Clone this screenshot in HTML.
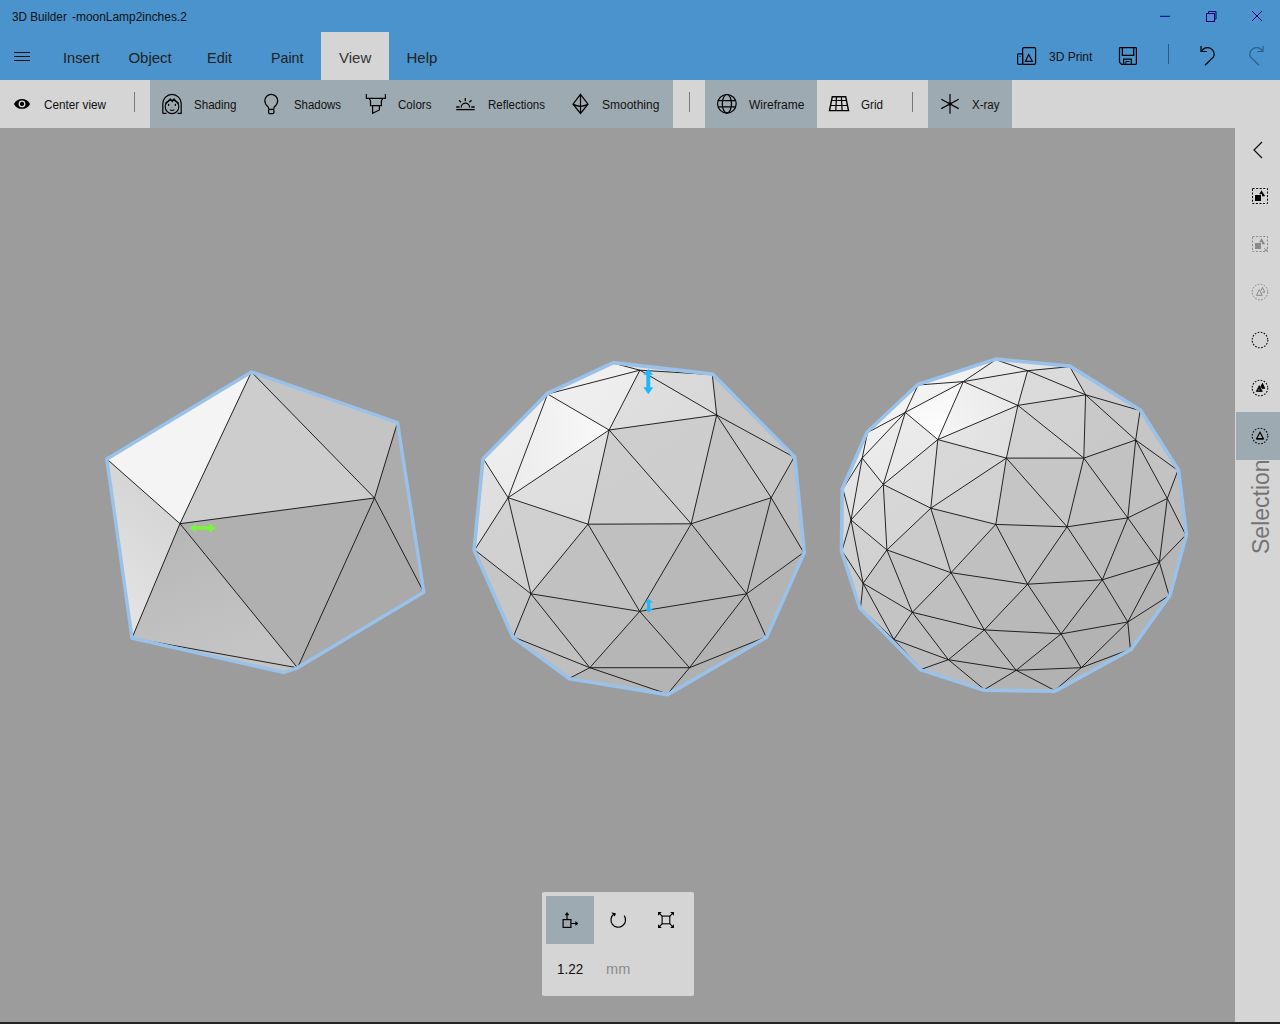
<!DOCTYPE html>
<html><head><meta charset="utf-8"><style>
html,body{margin:0;padding:0;width:1280px;height:1024px;overflow:hidden;background:#9c9c9c}
.t{position:absolute;font-family:"Liberation Sans",sans-serif;white-space:nowrap}
svg{overflow:visible}
</style></head><body>
<div style="position:absolute;left:0;top:0;width:1280px;height:80px;background:#4a93cc"></div><div style="position:absolute;left:321px;top:32px;width:68px;height:48px;background:#d5d5d5"></div><div style="position:absolute;left:0;top:80px;width:1280px;height:48px;background:#d5d5d5"></div><div style="position:absolute;left:150px;top:80px;width:523px;height:48px;background:#9eaab1"></div><div style="position:absolute;left:705px;top:80px;width:112px;height:48px;background:#9eaab1"></div><div style="position:absolute;left:928px;top:80px;width:84px;height:48px;background:#9eaab1"></div><div style="position:absolute;left:0;top:128px;width:1235px;height:894px;background:#9c9c9c"></div><div style="position:absolute;left:1235px;top:128px;width:45px;height:894px;background:#d5d5d5"></div><div style="position:absolute;left:1236px;top:412px;width:44px;height:48px;background:#9eaab1"></div><div style="position:absolute;left:0;top:1022px;width:1280px;height:2px;background:#222"></div><div style="position:absolute;left:134px;top:92px;width:1px;height:20px;background:#777"></div><div style="position:absolute;left:689px;top:92px;width:1px;height:20px;background:#777"></div><div style="position:absolute;left:912px;top:92px;width:1px;height:20px;background:#777"></div><div style="position:absolute;left:1168px;top:44px;width:1px;height:20px;background:#2a5a80"></div><div class="t" style="left:12px;top:10.94px;font-size:12px;line-height:12px;color:#111;transform:scaleX(0.978);transform-origin:0 0;">3D Builder</div>
<div class="t" style="left:72.4px;top:10.94px;font-size:12px;line-height:12px;color:#111;transform:scaleX(0.995);transform-origin:0 0;">-moonLamp2inches.2</div>
<div class="t" style="left:63.3px;top:49.80px;font-size:15px;line-height:15px;color:#222;transform:scaleX(0.978);transform-origin:0 0;">Insert</div>
<div class="t" style="left:128.4px;top:49.80px;font-size:15px;line-height:15px;color:#222;">Object</div>
<div class="t" style="left:207px;top:49.80px;font-size:15px;line-height:15px;color:#222;transform:scaleX(0.967);transform-origin:0 0;">Edit</div>
<div class="t" style="left:270.5px;top:49.80px;font-size:15px;line-height:15px;color:#222;transform:scaleX(0.95);transform-origin:0 0;">Paint</div>
<div class="t" style="left:339px;top:49.80px;font-size:15px;line-height:15px;color:#333;">View</div>
<div class="t" style="left:406.5px;top:49.80px;font-size:15px;line-height:15px;color:#222;">Help</div>
<div class="t" style="left:44.2px;top:99.44px;font-size:12px;line-height:12px;color:#111;transform:scaleX(0.979);transform-origin:0 0;">Center view</div>
<div class="t" style="left:194px;top:99.44px;font-size:12px;line-height:12px;color:#111;transform:scaleX(0.965);transform-origin:0 0;">Shading</div>
<div class="t" style="left:294px;top:99.44px;font-size:12px;line-height:12px;color:#111;transform:scaleX(0.952);transform-origin:0 0;">Shadows</div>
<div class="t" style="left:398px;top:99.44px;font-size:12px;line-height:12px;color:#111;transform:scaleX(0.966);transform-origin:0 0;">Colors</div>
<div class="t" style="left:488px;top:99.44px;font-size:12px;line-height:12px;color:#111;transform:scaleX(0.96);transform-origin:0 0;">Reflections</div>
<div class="t" style="left:602px;top:99.44px;font-size:12px;line-height:12px;color:#111;">Smoothing</div>
<div class="t" style="left:749px;top:99.44px;font-size:12px;line-height:12px;color:#111;">Wireframe</div>
<div class="t" style="left:861px;top:99.44px;font-size:12px;line-height:12px;color:#111;transform:scaleX(0.97);transform-origin:0 0;">Grid</div>
<div class="t" style="left:972px;top:99.44px;font-size:12px;line-height:12px;color:#111;transform:scaleX(0.959);transform-origin:0 0;">X-ray</div>
<div class="t" style="left:1049px;top:51.24px;font-size:12px;line-height:12px;color:#111;">3D Print</div>
<div style="position:absolute;left:542px;top:892px;width:152px;height:104px;background:#d5d5d5;border-radius:2px"></div><div style="position:absolute;left:546px;top:896px;width:48px;height:48px;background:#9eaab1"></div><div class="t" style="left:557px;top:961.65px;font-size:14px;line-height:14px;color:#111;transform:scaleX(0.963);transform-origin:0 0;">1.22</div>
<div class="t" style="left:605.7px;top:961.65px;font-size:14px;line-height:14px;color:#8a8a8a;transform:scaleX(1.04);transform-origin:0 0;">mm</div>
<div class="t" style="left:1250px;top:554px;font-size:23px;line-height:23px;color:#747474;transform:rotate(-90deg);transform-origin:0 0;width:100px">Selection</div><div style="position:absolute;left:14px;top:51.5px;width:16px;height:1px;background:#111"></div><div style="position:absolute;left:14px;top:55.5px;width:16px;height:1px;background:#111"></div><div style="position:absolute;left:14px;top:59.5px;width:16px;height:1px;background:#111"></div><svg style="position:absolute;left:12px;top:96px" width="20" height="16" viewBox="0 0 20 16" fill="none" stroke="#000" stroke-width="1.2"><path d="M1.9 7.9 C5.2 1.3 14.8 1.3 18.1 7.9 C14.8 14.5 5.2 14.5 1.9 7.9 Z" fill="#000" stroke="none"/><circle cx="10" cy="7.9" r="2.75" fill="none" stroke="#d5d5d5" stroke-width="1.4"/><circle cx="10" cy="7.9" r="1.7" fill="#000" stroke="none"/></svg>
<svg style="position:absolute;left:155px;top:88px" width="40" height="32" viewBox="0 0 40 32" fill="none" stroke="#000" stroke-width="1.2"><path d="M7.8 25.4 V15.6 A9.2 9.2 0 0 1 26.2 15.6 V25.4 H22.5 M7.8 25.4 H11.5"/><circle cx="17" cy="18.8" r="6.8"/><path d="M10.3 15.2 L13 13.5 L15.2 11 L17.3 13.6 L19 11 L21.3 13.5 L23.8 15.2"/><ellipse cx="13.6" cy="16.9" rx="0.75" ry="1.1" fill="#000" stroke="none"/><ellipse cx="20.4" cy="16.9" rx="0.75" ry="1.1" fill="#000" stroke="none"/><circle cx="17" cy="19" r="0.5" fill="#444" stroke="none"/><path d="M15 21.6 Q17 23.4 19.4 21.6" stroke-width="1.1"/></svg>
<svg style="position:absolute;left:255px;top:88px" width="40" height="32" viewBox="0 0 40 32" fill="none" stroke="#000" stroke-width="1.2"><path d="M13.8 21.3 L13.4 19.3 C11 17.2 9.8 15.3 9.8 12.8 A6.45 6.45 0 0 1 22.7 12.8 C22.7 15.3 21.5 17.2 19.1 19.3 L18.7 21.3"/><rect x="13.6" y="21.3" width="5.3" height="4.3" rx="1"/></svg>
<svg style="position:absolute;left:358px;top:88px" width="40" height="32" viewBox="0 0 40 32" fill="none" stroke="#000" stroke-width="1.2"><path d="M8.4 6 V10.3 H27.4 V6"/><path d="M11.2 10.5 L12.5 12.8 V17.7 H23.4 V12.8 L24.7 10.5"/><path d="M14.6 17.8 V25.4 L21.4 22 V17.8"/></svg>
<svg style="position:absolute;left:448px;top:88px" width="40" height="32" viewBox="0 0 40 32" fill="none" stroke="#000" stroke-width="1.2"><path d="M13.2 19.4 A4.2 4.2 0 0 1 21.6 19.4"/><path d="M17.3 10 V13.3 M11 12.3 L13 14.3 M23.5 12.3 L21.4 14.3" stroke-width="1.3"/><path d="M8.2 19 H11.6 M23.3 19 H26.7" stroke-width="1.5"/><path d="M8.2 21.6 H26.7" stroke-width="1.3"/></svg>
<svg style="position:absolute;left:562px;top:88px" width="40" height="32" viewBox="0 0 40 32" fill="none" stroke="#000" stroke-width="1.2"><path d="M18.5 6.3 L26 16.2 L18.5 25.5 L11 16.2 Z M18.5 6.3 V25.5 M11.3 16.4 Q18.5 20.2 25.7 16.4" stroke-linejoin="miter"/></svg>
<svg style="position:absolute;left:708px;top:88px" width="40" height="32" viewBox="0 0 40 32" fill="none" stroke="#000" stroke-width="1.2"><circle cx="18.9" cy="15.8" r="9.3"/><ellipse cx="18.9" cy="15.8" rx="4.6" ry="9.3"/><path d="M9.8 12.7 H28 M9.8 18.9 H28"/></svg>
<svg style="position:absolute;left:820px;top:88px" width="40" height="32" viewBox="0 0 40 32" fill="none" stroke="#000" stroke-width="1.2"><path d="M12.3 8.7 H25.7 L28.5 22.6 H9.5 Z" stroke-width="1.4"/><path d="M16.5 8.7 L15.8 22.6 M21.4 8.7 L22.1 22.6 M11.5 12.5 H26.5 M10.5 17.5 H27.5"/></svg>
<svg style="position:absolute;left:930px;top:88px" width="40" height="32" viewBox="0 0 40 32" fill="none" stroke="#000" stroke-width="1.2"><path d="M20 6 V25.8" stroke-width="1.4" stroke="#1a1a1a"/><path d="M11.3 11.2 L28.7 20.6 M11.3 20.6 L28.7 11.2"/><circle cx="20" cy="15.9" r="1.6" fill="#000" stroke="none"/></svg>
<svg style="position:absolute;left:1010px;top:40px" width="40" height="32" viewBox="0 0 40 32" fill="none" stroke="#000" stroke-width="1.2"><rect x="7.6" y="13.8" width="5" height="10.5" rx="1"/><rect x="12.6" y="7.6" width="13" height="16.7" rx="1.2"/><path d="M15.4 21.3 H22.4 L18.7 14.5 Z"/><path d="M9.4 16.4 H10.6" stroke-width="0.8"/></svg>
<svg style="position:absolute;left:1108px;top:40px" width="40" height="32" viewBox="0 0 40 32" fill="none" stroke="#000" stroke-width="1.2"><path d="M12.3 7.6 H27.6 Q28.4 7.6 28.4 8.4 V23.6 Q28.4 24.3 27.6 24.3 H13.6 L11.5 22.2 V8.4 Q11.5 7.6 12.3 7.6 Z"/><path d="M14.4 7.6 V15.4 H25.7 V7.6"/><path d="M15.6 24.3 V19.2 H23.3 V24.3"/><path d="M17.8 24 V21.5 H21.5" stroke-width="0.9"/></svg>
<svg style="position:absolute;left:1190px;top:40px" width="80" height="32" viewBox="0 0 80 32" fill="none" stroke="#000" stroke-width="1.2"><path d="M11.6 11.3 A6.3 6.3 0 1 1 23.5 17 L15 25.3"/><path d="M11 6 V11.5 H16.8"/><g stroke="#1f4e78" opacity="0.75"><path d="M72.4 11.3 A6.3 6.3 0 1 0 60.5 17 L69 25.3"/><path d="M73 6 V11.5 H67.2"/></g></svg>
<svg style="position:absolute;left:1150px;top:4px" width="120" height="24" viewBox="0 0 120 24" fill="none" stroke="#000" stroke-width="1.2"><g stroke="#000080" stroke-width="1"><path d="M10 12.3 H20"/><path d="M58.5 9 V7.5 H66 V15 H64.5"/><rect x="56.5" y="9.5" width="8" height="8"/><path d="M102 7 L112 17 M112 7 L102 17"/></g></svg>
<svg style="position:absolute;left:1244px;top:136px" width="32" height="28" viewBox="0 0 32 28" fill="none" stroke="#000" stroke-width="1.2"><path d="M18 6 L10 14 L18 22" stroke="#111"/></svg>
<svg style="position:absolute;left:1244px;top:180px" width="32" height="32" viewBox="0 0 32 32" fill="none" stroke="#000" stroke-width="1.2"><rect x="8.5" y="8.5" width="15" height="15" stroke-width="1" stroke-dasharray="2 1.6"/><rect x="11" y="15" width="6" height="6" fill="#000" stroke="none"/><path d="M17.5 10.3 L21.2 16.3 H18 V14.3 H15.2 Z" fill="#000" stroke="none"/></svg>
<svg style="position:absolute;left:1244px;top:228px" width="32" height="32" viewBox="0 0 32 32" fill="none" stroke="#000" stroke-width="1.2"><g stroke="#8a8a8a" fill="#8a8a8a"><rect x="8.5" y="8.5" width="15" height="15" fill="none" stroke-width="1" stroke-dasharray="2 1.6"/><rect x="11" y="15" width="6" height="6" stroke="none"/><path d="M17.5 10.3 L21.2 16.3 H18 V14.3 H15.2 Z" stroke="none"/><path d="M20.3 20.3 L23.3 23.3 M23.3 20.3 L20.3 23.3" fill="none" stroke-width="1"/></g></svg>
<svg style="position:absolute;left:1244px;top:276px" width="32" height="32" viewBox="0 0 32 32" fill="none" stroke="#000" stroke-width="1.2"><g stroke="#8a8a8a"><circle cx="16" cy="16" r="7.8" stroke-width="1" stroke-dasharray="1.7 1.4"/><path d="M12.4 19.3 L15.3 13.6 L18.2 19.3 Z M16.9 14.6 L18.5 11.4 L20.7 16.3 H18.4" stroke-width="1"/></g></svg>
<svg style="position:absolute;left:1244px;top:324px" width="32" height="32" viewBox="0 0 32 32" fill="none" stroke="#000" stroke-width="1.2"><circle cx="16" cy="16" r="7.8" stroke-width="1.1" stroke-dasharray="1.7 1.4" stroke="#111"/></svg>
<svg style="position:absolute;left:1244px;top:372px" width="32" height="32" viewBox="0 0 32 32" fill="none" stroke="#000" stroke-width="1.2"><circle cx="16" cy="16" r="7.8" stroke-width="1.1" stroke-dasharray="1.7 1.4" stroke="#111"/><path d="M12.3 19.4 L15.3 13.6 L18.3 19.4 Z M16.9 14.6 L18.5 11.3 L20.8 16.4 H18.4 Z" fill="#000" stroke="#000" stroke-width="0.8"/><path d="M14.2 18.6 L15.3 16.2 V18.6 Z" fill="#d5d5d5" stroke="none"/></svg>
<svg style="position:absolute;left:1244px;top:420px" width="32" height="32" viewBox="0 0 32 32" fill="none" stroke="#000" stroke-width="1.2"><circle cx="16" cy="16" r="7.8" stroke-width="1.1" stroke-dasharray="1.7 1.4" stroke="#111"/><path d="M16 12.2 L19.3 18.6 H12.7 Z" stroke-width="1.2"/><path d="M12.5 18.8 H19.5" stroke-width="1.6"/></svg>
<svg style="position:absolute;left:550.7px;top:900px" width="40" height="40" viewBox="0 0 40 40" fill="none" stroke="#000" stroke-width="1.2"><rect x="12.1" y="19.6" width="7.8" height="7.8"/><path d="M16 19.5 V14.5 M20 23.5 H25"/><path d="M14.3 14.8 L16 12.6 L17.7 14.8 Z M24.7 21.8 L27 23.5 L24.7 25.2 Z" fill="#000" stroke-width="0.8"/></svg>
<svg style="position:absolute;left:598px;top:900px" width="40" height="40" viewBox="0 0 40 40" fill="none" stroke="#000" stroke-width="1.2"><path d="M26.2 15.7 A7.3 7.3 0 1 1 15.9 14.1" stroke-width="1.2"/><path d="M13.3 12.2 L18 13.5 L16.7 16.6 Z" fill="#000" stroke="none"/></svg>
<svg style="position:absolute;left:646px;top:900px" width="40" height="40" viewBox="0 0 40 40" fill="none" stroke="#000" stroke-width="1.2"><rect x="16.1" y="16.1" width="7.7" height="7.7" stroke-width="1.1"/><path d="M13 13 L16.3 16.3 M27 13 L23.7 16.3 M13 27 L16.3 23.7 M27 27 L23.7 23.7" stroke-width="1.1"/><path d="M12 12 H15.8 L12 15.8 Z M28 12 H24.2 L28 15.8 Z M12 28 H15.8 L12 24.2 Z M28 28 H24.2 L28 24.2 Z" fill="#000" stroke="none"/></svg>

<svg style="position:absolute;left:0;top:0" width="1280" height="1024" viewBox="0 0 1280 1024"><defs><linearGradient id="g0" gradientUnits="userSpaceOnUse" x1="508.1" y1="497.7" x2="477.9" y2="421.7"><stop offset="0" stop-color="rgb(235,235,235)"/><stop offset="1" stop-color="rgb(239,239,239)"/></linearGradient><linearGradient id="g1" gradientUnits="userSpaceOnUse" x1="530.9" y1="593.8" x2="481.1" y2="514.7"><stop offset="0" stop-color="rgb(207,207,207)"/><stop offset="1" stop-color="rgb(208,208,208)"/></linearGradient><linearGradient id="g2" gradientUnits="userSpaceOnUse" x1="474.7" y1="549.9" x2="449.8" y2="469.4"><stop offset="0" stop-color="rgb(222,222,222)"/><stop offset="1" stop-color="rgb(224,224,224)"/></linearGradient><linearGradient id="g3" gradientUnits="userSpaceOnUse" x1="530.9" y1="593.8" x2="507.1" y2="497.9"><stop offset="0" stop-color="rgb(208,208,208)"/><stop offset="1" stop-color="rgb(210,210,210)"/></linearGradient><linearGradient id="g4" gradientUnits="userSpaceOnUse" x1="712.3" y1="374.6" x2="615.7" y2="384.5"><stop offset="0" stop-color="rgb(226,226,226)"/><stop offset="1" stop-color="rgb(229,229,229)"/></linearGradient><linearGradient id="g5" gradientUnits="userSpaceOnUse" x1="716.7" y1="415.0" x2="640.5" y2="369.2"><stop offset="0" stop-color="rgb(217,217,217)"/><stop offset="1" stop-color="rgb(219,219,219)"/></linearGradient><linearGradient id="g6" gradientUnits="userSpaceOnUse" x1="639.9" y1="370.2" x2="607.0" y2="336.3"><stop offset="0" stop-color="rgb(239,239,239)"/><stop offset="1" stop-color="rgb(241,241,241)"/></linearGradient><linearGradient id="g7" gradientUnits="userSpaceOnUse" x1="609.1" y1="430.0" x2="554.3" y2="385.7"><stop offset="0" stop-color="rgb(236,236,236)"/><stop offset="1" stop-color="rgb(239,239,239)"/></linearGradient><linearGradient id="g8" gradientUnits="userSpaceOnUse" x1="588.0" y1="524.2" x2="572.6" y2="436.4"><stop offset="0" stop-color="rgb(221,221,221)"/><stop offset="1" stop-color="rgb(225,225,225)"/></linearGradient><linearGradient id="g9" gradientUnits="userSpaceOnUse" x1="508.1" y1="497.7" x2="615.6" y2="485.0"><stop offset="0" stop-color="rgb(235,235,235)"/><stop offset="1" stop-color="rgb(249,249,249)"/></linearGradient><linearGradient id="g10" gradientUnits="userSpaceOnUse" x1="716.7" y1="415.0" x2="665.8" y2="349.9"><stop offset="0" stop-color="rgb(220,220,220)"/><stop offset="1" stop-color="rgb(223,223,223)"/></linearGradient><linearGradient id="g11" gradientUnits="userSpaceOnUse" x1="691.2" y1="523.8" x2="630.0" y2="417.9"><stop offset="0" stop-color="rgb(205,205,205)"/><stop offset="1" stop-color="rgb(206,206,206)"/></linearGradient><linearGradient id="g12" gradientUnits="userSpaceOnUse" x1="691.2" y1="523.8" x2="606.7" y2="432.3"><stop offset="0" stop-color="rgb(205,205,205)"/><stop offset="1" stop-color="rgb(206,206,206)"/></linearGradient><linearGradient id="g13" gradientUnits="userSpaceOnUse" x1="860.5" y1="607.9" x2="860.4" y2="550.8"><stop offset="0" stop-color="rgb(202,202,202)"/><stop offset="1" stop-color="rgb(203,203,203)"/></linearGradient><linearGradient id="g14" gradientUnits="userSpaceOnUse" x1="842.9" y1="488.9" x2="877.7" y2="439.9"><stop offset="0" stop-color="rgb(233,233,233)"/><stop offset="1" stop-color="rgb(235,235,235)"/></linearGradient><linearGradient id="g15" gradientUnits="userSpaceOnUse" x1="842.0" y1="550.8" x2="849.5" y2="489.7"><stop offset="0" stop-color="rgb(217,217,217)"/><stop offset="1" stop-color="rgb(218,218,218)"/></linearGradient><linearGradient id="g16" gradientUnits="userSpaceOnUse" x1="863.1" y1="583.3" x2="865.9" y2="520.7"><stop offset="0" stop-color="rgb(209,209,209)"/><stop offset="1" stop-color="rgb(210,210,210)"/></linearGradient><linearGradient id="g17" gradientUnits="userSpaceOnUse" x1="851.0" y1="520.0" x2="851.0" y2="458.1"><stop offset="0" stop-color="rgb(226,226,226)"/><stop offset="1" stop-color="rgb(228,228,228)"/></linearGradient><linearGradient id="g18" gradientUnits="userSpaceOnUse" x1="851.0" y1="520.0" x2="829.8" y2="472.5"><stop offset="0" stop-color="rgb(225,225,225)"/><stop offset="1" stop-color="rgb(227,227,227)"/></linearGradient><linearGradient id="g19" gradientUnits="userSpaceOnUse" x1="863.1" y1="583.3" x2="837.4" y2="526.1"><stop offset="0" stop-color="rgb(209,209,209)"/><stop offset="1" stop-color="rgb(210,210,210)"/></linearGradient><linearGradient id="g20" gradientUnits="userSpaceOnUse" x1="886.9" y1="549.9" x2="864.1" y2="492.1"><stop offset="0" stop-color="rgb(216,216,216)"/><stop offset="1" stop-color="rgb(217,217,217)"/></linearGradient><linearGradient id="g21" gradientUnits="userSpaceOnUse" x1="1069.8" y1="366.7" x2="1017.5" y2="329.3"><stop offset="0" stop-color="rgb(227,227,227)"/><stop offset="1" stop-color="rgb(229,229,229)"/></linearGradient><linearGradient id="g22" gradientUnits="userSpaceOnUse" x1="1083.8" y1="458.1" x2="1038.1" y2="391.5"><stop offset="0" stop-color="rgb(209,209,209)"/><stop offset="1" stop-color="rgb(210,210,210)"/></linearGradient><linearGradient id="g23" gradientUnits="userSpaceOnUse" x1="1135.7" y1="440.0" x2="1092.3" y2="389.1"><stop offset="0" stop-color="rgb(200,200,200)"/><stop offset="1" stop-color="rgb(201,201,201)"/></linearGradient><linearGradient id="g24" gradientUnits="userSpaceOnUse" x1="1083.8" y1="458.1" x2="1025.1" y2="398.3"><stop offset="0" stop-color="rgb(209,209,209)"/><stop offset="1" stop-color="rgb(210,210,210)"/></linearGradient><linearGradient id="g25" gradientUnits="userSpaceOnUse" x1="1085.6" y1="394.8" x2="1049.3" y2="352.2"><stop offset="0" stop-color="rgb(218,218,218)"/><stop offset="1" stop-color="rgb(219,219,219)"/></linearGradient><linearGradient id="g26" gradientUnits="userSpaceOnUse" x1="1085.6" y1="394.8" x2="1034.7" y2="360.2"><stop offset="0" stop-color="rgb(218,218,218)"/><stop offset="1" stop-color="rgb(220,220,220)"/></linearGradient><linearGradient id="g27" gradientUnits="userSpaceOnUse" x1="1140.1" y1="410.6" x2="1073.9" y2="361.2"><stop offset="0" stop-color="rgb(205,205,205)"/><stop offset="1" stop-color="rgb(205,205,205)"/></linearGradient><linearGradient id="g28" gradientUnits="userSpaceOnUse" x1="1135.7" y1="440.0" x2="1078.2" y2="408.0"><stop offset="0" stop-color="rgb(201,201,201)"/><stop offset="1" stop-color="rgb(201,201,201)"/></linearGradient><linearGradient id="g29" gradientUnits="userSpaceOnUse" x1="1006.4" y1="458.1" x2="939.2" y2="435.5"><stop offset="0" stop-color="rgb(224,224,224)"/><stop offset="1" stop-color="rgb(230,230,230)"/></linearGradient><linearGradient id="g30" gradientUnits="userSpaceOnUse" x1="883.3" y1="484.5" x2="859.6" y2="433.7"><stop offset="0" stop-color="rgb(233,233,233)"/><stop offset="1" stop-color="rgb(235,235,235)"/></linearGradient><linearGradient id="g31" gradientUnits="userSpaceOnUse" x1="883.3" y1="484.5" x2="870.3" y2="419.4"><stop offset="0" stop-color="rgb(232,232,232)"/><stop offset="1" stop-color="rgb(235,235,235)"/></linearGradient><linearGradient id="g32" gradientUnits="userSpaceOnUse" x1="867.5" y1="432.6" x2="859.1" y2="400.4"><stop offset="0" stop-color="rgb(242,242,242)"/><stop offset="1" stop-color="rgb(243,243,243)"/></linearGradient><linearGradient id="g33" gradientUnits="userSpaceOnUse" x1="862.2" y1="458.1" x2="853.1" y2="428.5"><stop offset="0" stop-color="rgb(239,239,239)"/><stop offset="1" stop-color="rgb(241,241,241)"/></linearGradient><linearGradient id="g34" gradientUnits="userSpaceOnUse" x1="995.8" y1="524.4" x2="968.4" y2="483.2"><stop offset="0" stop-color="rgb(209,209,209)"/><stop offset="1" stop-color="rgb(210,210,210)"/></linearGradient><linearGradient id="g35" gradientUnits="userSpaceOnUse" x1="930.8" y1="508.2" x2="901.8" y2="462.4"><stop offset="0" stop-color="rgb(215,215,215)"/><stop offset="1" stop-color="rgb(216,216,216)"/></linearGradient><linearGradient id="g36" gradientUnits="userSpaceOnUse" x1="951.0" y1="572.7" x2="915.1" y2="518.6"><stop offset="0" stop-color="rgb(200,200,200)"/><stop offset="1" stop-color="rgb(200,200,200)"/></linearGradient><linearGradient id="g37" gradientUnits="userSpaceOnUse" x1="930.8" y1="508.2" x2="905.1" y2="455.6"><stop offset="0" stop-color="rgb(221,221,221)"/><stop offset="1" stop-color="rgb(223,223,223)"/></linearGradient><linearGradient id="g38" gradientUnits="userSpaceOnUse" x1="951.0" y1="572.7" x2="919.7" y2="514.1"><stop offset="0" stop-color="rgb(203,203,203)"/><stop offset="1" stop-color="rgb(203,203,203)"/></linearGradient><linearGradient id="g39" gradientUnits="userSpaceOnUse" x1="886.9" y1="549.9" x2="857.4" y2="499.7"><stop offset="0" stop-color="rgb(214,214,214)"/><stop offset="1" stop-color="rgb(215,215,215)"/></linearGradient><linearGradient id="g40" gradientUnits="userSpaceOnUse" x1="995.8" y1="359.7" x2="965.4" y2="332.3"><stop offset="0" stop-color="rgb(241,241,241)"/><stop offset="1" stop-color="rgb(243,243,243)"/></linearGradient><linearGradient id="g41" gradientUnits="userSpaceOnUse" x1="963.3" y1="381.6" x2="949.3" y2="362.3"><stop offset="0" stop-color="rgb(242,242,242)"/><stop offset="1" stop-color="rgb(243,243,243)"/></linearGradient><linearGradient id="g42" gradientUnits="userSpaceOnUse" x1="1027.6" y1="370.7" x2="1001.5" y2="344.1"><stop offset="0" stop-color="rgb(233,233,233)"/><stop offset="1" stop-color="rgb(235,235,235)"/></linearGradient><linearGradient id="g43" gradientUnits="userSpaceOnUse" x1="1017.9" y1="405.4" x2="981.2" y2="365.2"><stop offset="0" stop-color="rgb(229,229,229)"/><stop offset="1" stop-color="rgb(232,232,232)"/></linearGradient><linearGradient id="g44" gradientUnits="userSpaceOnUse" x1="1017.9" y1="405.4" x2="946.4" y2="452.6"><stop offset="0" stop-color="rgb(233,233,233)"/><stop offset="1" stop-color="rgb(246,246,246)"/></linearGradient><linearGradient id="g45" gradientUnits="userSpaceOnUse" x1="963.3" y1="381.6" x2="980.7" y2="420.2"><stop offset="0" stop-color="rgb(247,247,247)"/><stop offset="1" stop-color="rgb(255,255,255)"/></linearGradient><linearGradient id="ig1" gradientUnits="userSpaceOnUse" x1="180" y1="524" x2="118" y2="600"><stop offset="0" stop-color="#d6d6d6"/><stop offset="1" stop-color="#e2e2e2"/></linearGradient><linearGradient id="ig2" gradientUnits="userSpaceOnUse" x1="180" y1="524" x2="230" y2="655"><stop offset="0" stop-color="#b7b7b7"/><stop offset="1" stop-color="#c4c4c4"/></linearGradient></defs><polygon points="746.6,593.8 766.0,636.9 803.7,552.5" fill="rgb(180,180,180)" stroke="rgb(180,180,180)" stroke-width="0.5"/>
<polygon points="513.3,636.9 530.9,593.8 474.7,549.9" fill="rgb(198,198,198)" stroke="rgb(198,198,198)" stroke-width="0.5"/>
<polygon points="508.1,497.7 547.6,394.0 483.5,459.0" fill="url(#g0)" stroke="url(#g0)" stroke-width="0.5"/>
<polygon points="508.1,497.7 530.9,593.8 588.0,524.2" fill="url(#g1)" stroke="url(#g1)" stroke-width="0.5"/>
<polygon points="508.1,497.7 483.5,459.0 474.7,549.9" fill="url(#g2)" stroke="url(#g2)" stroke-width="0.5"/>
<polygon points="508.1,497.7 530.9,593.8 474.7,549.9" fill="url(#g3)" stroke="url(#g3)" stroke-width="0.5"/>
<polygon points="689.5,667.7 766.0,636.9 667.5,694.0" fill="rgb(176,176,176)" stroke="rgb(176,176,176)" stroke-width="0.5"/>
<polygon points="689.5,667.7 746.6,593.8 766.0,636.9" fill="rgb(178,178,178)" stroke="rgb(178,178,178)" stroke-width="0.5"/>
<polygon points="639.9,370.2 712.3,374.6 613.5,363.2" fill="url(#g4)" stroke="url(#g4)" stroke-width="0.5"/>
<polygon points="639.9,370.2 716.7,415.0 712.3,374.6" fill="url(#g5)" stroke="url(#g5)" stroke-width="0.5"/>
<polygon points="639.9,370.2 547.6,394.0 613.5,363.2" fill="url(#g6)" stroke="url(#g6)" stroke-width="0.5"/>
<polygon points="794.1,457.2 716.7,415.0 712.3,374.6" fill="rgb(199,199,199)" stroke="rgb(199,199,199)" stroke-width="0.5"/>
<polygon points="589.8,667.7 689.5,667.7 667.5,694.0" fill="rgb(180,180,180)" stroke="rgb(180,180,180)" stroke-width="0.5"/>
<polygon points="589.8,667.7 513.3,636.9 530.9,593.8" fill="rgb(192,192,192)" stroke="rgb(192,192,192)" stroke-width="0.5"/>
<polygon points="609.1,430.0 639.9,370.2 547.6,394.0" fill="url(#g7)" stroke="url(#g7)" stroke-width="0.5"/>
<polygon points="609.1,430.0 508.1,497.7 588.0,524.2" fill="url(#g8)" stroke="url(#g8)" stroke-width="0.5"/>
<polygon points="609.1,430.0 508.1,497.7 547.6,394.0" fill="url(#g9)" stroke="url(#g9)" stroke-width="0.5"/>
<polygon points="609.1,430.0 639.9,370.2 716.7,415.0" fill="url(#g10)" stroke="url(#g10)" stroke-width="0.5"/>
<polygon points="609.1,430.0 691.2,523.8 588.0,524.2" fill="url(#g11)" stroke="url(#g11)" stroke-width="0.5"/>
<polygon points="609.1,430.0 691.2,523.8 716.7,415.0" fill="url(#g12)" stroke="url(#g12)" stroke-width="0.5"/>
<polygon points="771.2,497.7 794.1,457.2 803.7,552.5" fill="rgb(190,190,190)" stroke="rgb(190,190,190)" stroke-width="0.5"/>
<polygon points="771.2,497.7 794.1,457.2 716.7,415.0" fill="rgb(198,198,198)" stroke="rgb(198,198,198)" stroke-width="0.5"/>
<polygon points="771.2,497.7 746.6,593.8 803.7,552.5" fill="rgb(184,184,184)" stroke="rgb(184,184,184)" stroke-width="0.5"/>
<polygon points="771.2,497.7 691.2,523.8 746.6,593.8" fill="rgb(188,188,188)" stroke="rgb(188,188,188)" stroke-width="0.5"/>
<polygon points="771.2,497.7 691.2,523.8 716.7,415.0" fill="rgb(196,196,196)" stroke="rgb(196,196,196)" stroke-width="0.5"/>
<polygon points="569.6,678.2 589.8,667.7 667.5,694.0" fill="rgb(181,181,181)" stroke="rgb(181,181,181)" stroke-width="0.5"/>
<polygon points="569.6,678.2 589.8,667.7 513.3,636.9" fill="rgb(191,191,191)" stroke="rgb(191,191,191)" stroke-width="0.5"/>
<polygon points="639.7,611.4 589.8,667.7 689.5,667.7" fill="rgb(182,182,182)" stroke="rgb(182,182,182)" stroke-width="0.5"/>
<polygon points="639.7,611.4 691.2,523.8 588.0,524.2" fill="rgb(192,192,192)" stroke="rgb(192,192,192)" stroke-width="0.5"/>
<polygon points="639.7,611.4 530.9,593.8 588.0,524.2" fill="rgb(193,193,193)" stroke="rgb(193,193,193)" stroke-width="0.5"/>
<polygon points="639.7,611.4 589.8,667.7 530.9,593.8" fill="rgb(189,189,189)" stroke="rgb(189,189,189)" stroke-width="0.5"/>
<polygon points="639.7,611.4 689.5,667.7 746.6,593.8" fill="rgb(181,181,181)" stroke="rgb(181,181,181)" stroke-width="0.5"/>
<polygon points="639.7,611.4 691.2,523.8 746.6,593.8" fill="rgb(185,185,185)" stroke="rgb(185,185,185)" stroke-width="0.5"/>
<path d="M613.5 363.2L639.9 370.2M639.9 370.2L712.3 374.6M639.9 370.2L547.6 394.0M639.9 370.2L609.1 430.0M639.9 370.2L716.7 415.0M712.3 374.6L716.7 415.0M547.6 394.0L609.1 430.0M547.6 394.0L508.1 497.7M609.1 430.0L716.7 415.0M609.1 430.0L508.1 497.7M609.1 430.0L588.0 524.2M609.1 430.0L691.2 523.8M716.7 415.0L794.1 457.2M716.7 415.0L691.2 523.8M716.7 415.0L771.2 497.7M483.5 459.0L508.1 497.7M794.1 457.2L771.2 497.7M508.1 497.7L588.0 524.2M508.1 497.7L474.7 549.9M508.1 497.7L530.9 593.8M588.0 524.2L691.2 523.8M588.0 524.2L530.9 593.8M588.0 524.2L639.7 611.4M691.2 523.8L771.2 497.7M691.2 523.8L639.7 611.4M691.2 523.8L746.6 593.8M771.2 497.7L803.7 552.5M771.2 497.7L746.6 593.8M474.7 549.9L530.9 593.8M803.7 552.5L746.6 593.8M530.9 593.8L639.7 611.4M530.9 593.8L513.3 636.9M530.9 593.8L589.8 667.7M639.7 611.4L746.6 593.8M639.7 611.4L589.8 667.7M639.7 611.4L689.5 667.7M746.6 593.8L766.0 636.9M746.6 593.8L689.5 667.7M513.3 636.9L589.8 667.7M766.0 636.9L689.5 667.7M589.8 667.7L689.5 667.7M589.8 667.7L569.6 678.2M589.8 667.7L667.5 694.0M689.5 667.7L667.5 694.0" stroke="#111" stroke-width="0.9" fill="none"/>
<polygon points="474.1,550.0 483.0,458.7 547.3,393.5 613.4,362.6 712.6,374.1 794.7,457.0 804.3,552.6 766.5,637.3 667.6,694.6 569.4,678.8 512.9,637.3" fill="none" stroke="#99c1e9" stroke-width="3.6" stroke-linejoin="round"/>
<polygon points="1169.1,595.6 1159.4,562.2 1185.8,535.0" fill="rgb(182,182,182)" stroke="rgb(182,182,182)" stroke-width="0.5"/>
<polygon points="995.8,524.4 951.0,572.7 1027.6,584.2" fill="rgb(192,192,192)" stroke="rgb(192,192,192)" stroke-width="0.5"/>
<polygon points="863.1,583.3 860.5,607.9 842.0,550.8" fill="url(#g13)" stroke="url(#g13)" stroke-width="0.5"/>
<polygon points="1081.2,667.7 1016.2,670.3 1054.8,690.5" fill="rgb(178,178,178)" stroke="rgb(178,178,178)" stroke-width="0.5"/>
<polygon points="1081.2,667.7 1016.2,670.3 1061.0,633.9" fill="rgb(179,179,179)" stroke="rgb(179,179,179)" stroke-width="0.5"/>
<polygon points="1135.7,440.0 1177.9,470.4 1140.1,410.6" fill="rgb(198,198,198)" stroke="rgb(198,198,198)" stroke-width="0.5"/>
<polygon points="1102.3,579.8 1061.0,633.9 1027.6,584.2" fill="rgb(184,184,184)" stroke="rgb(184,184,184)" stroke-width="0.5"/>
<polygon points="862.2,458.1 842.9,488.9 867.5,432.6" fill="url(#g14)" stroke="url(#g14)" stroke-width="0.5"/>
<polygon points="851.0,520.0 842.9,488.9 842.0,550.8" fill="url(#g15)" stroke="url(#g15)" stroke-width="0.5"/>
<polygon points="851.0,520.0 863.1,583.3 842.0,550.8" fill="url(#g16)" stroke="url(#g16)" stroke-width="0.5"/>
<polygon points="851.0,520.0 862.2,458.1 842.9,488.9" fill="url(#g17)" stroke="url(#g17)" stroke-width="0.5"/>
<polygon points="851.0,520.0 862.2,458.1 883.3,484.5" fill="url(#g18)" stroke="url(#g18)" stroke-width="0.5"/>
<polygon points="886.9,549.9 851.0,520.0 863.1,583.3" fill="url(#g19)" stroke="url(#g19)" stroke-width="0.5"/>
<polygon points="886.9,549.9 851.0,520.0 883.3,484.5" fill="url(#g20)" stroke="url(#g20)" stroke-width="0.5"/>
<polygon points="1130.4,649.2 1081.2,667.7 1054.8,690.5" fill="rgb(176,176,176)" stroke="rgb(176,176,176)" stroke-width="0.5"/>
<polygon points="1167.3,498.5 1135.7,440.0 1177.9,470.4" fill="rgb(195,195,195)" stroke="rgb(195,195,195)" stroke-width="0.5"/>
<polygon points="1167.3,498.5 1159.4,562.2 1185.8,535.0" fill="rgb(185,185,185)" stroke="rgb(185,185,185)" stroke-width="0.5"/>
<polygon points="1167.3,498.5 1177.9,470.4 1185.8,535.0" fill="rgb(189,189,189)" stroke="rgb(189,189,189)" stroke-width="0.5"/>
<polygon points="1027.6,370.7 1069.8,366.7 995.8,359.7" fill="url(#g21)" stroke="url(#g21)" stroke-width="0.5"/>
<polygon points="1006.4,458.1 1017.9,405.4 1083.8,458.1" fill="url(#g22)" stroke="url(#g22)" stroke-width="0.5"/>
<polygon points="1085.6,394.8 1135.7,440.0 1083.8,458.1" fill="url(#g23)" stroke="url(#g23)" stroke-width="0.5"/>
<polygon points="1085.6,394.8 1017.9,405.4 1083.8,458.1" fill="url(#g24)" stroke="url(#g24)" stroke-width="0.5"/>
<polygon points="1085.6,394.8 1027.6,370.7 1017.9,405.4" fill="url(#g25)" stroke="url(#g25)" stroke-width="0.5"/>
<polygon points="1085.6,394.8 1027.6,370.7 1069.8,366.7" fill="url(#g26)" stroke="url(#g26)" stroke-width="0.5"/>
<polygon points="1085.6,394.8 1069.8,366.7 1140.1,410.6" fill="url(#g27)" stroke="url(#g27)" stroke-width="0.5"/>
<polygon points="1085.6,394.8 1135.7,440.0 1140.1,410.6" fill="url(#g28)" stroke="url(#g28)" stroke-width="0.5"/>
<polygon points="937.8,439.6 1006.4,458.1 1017.9,405.4" fill="url(#g29)" stroke="url(#g29)" stroke-width="0.5"/>
<polygon points="1067.1,526.8 1006.4,458.1 995.8,524.4" fill="rgb(197,197,197)" stroke="rgb(197,197,197)" stroke-width="0.5"/>
<polygon points="1067.1,526.8 1006.4,458.1 1083.8,458.1" fill="rgb(198,198,198)" stroke="rgb(198,198,198)" stroke-width="0.5"/>
<polygon points="1067.1,526.8 995.8,524.4 1027.6,584.2" fill="rgb(192,192,192)" stroke="rgb(192,192,192)" stroke-width="0.5"/>
<polygon points="1067.1,526.8 1102.3,579.8 1027.6,584.2" fill="rgb(187,187,187)" stroke="rgb(187,187,187)" stroke-width="0.5"/>
<polygon points="1127.8,622.0 1081.2,667.7 1061.0,633.9" fill="rgb(179,179,179)" stroke="rgb(179,179,179)" stroke-width="0.5"/>
<polygon points="1127.8,622.0 1102.3,579.8 1061.0,633.9" fill="rgb(180,180,180)" stroke="rgb(180,180,180)" stroke-width="0.5"/>
<polygon points="1127.8,622.0 1102.3,579.8 1159.4,562.2" fill="rgb(182,182,182)" stroke="rgb(182,182,182)" stroke-width="0.5"/>
<polygon points="1127.8,622.0 1130.4,649.2 1081.2,667.7" fill="rgb(177,177,177)" stroke="rgb(177,177,177)" stroke-width="0.5"/>
<polygon points="1127.8,622.0 1169.1,595.6 1159.4,562.2" fill="rgb(180,180,180)" stroke="rgb(180,180,180)" stroke-width="0.5"/>
<polygon points="1127.8,622.0 1130.4,649.2 1169.1,595.6" fill="rgb(178,178,178)" stroke="rgb(178,178,178)" stroke-width="0.5"/>
<polygon points="984.4,629.9 948.4,659.7 1016.2,670.3" fill="rgb(184,184,184)" stroke="rgb(184,184,184)" stroke-width="0.5"/>
<polygon points="984.4,629.9 951.0,572.7 1027.6,584.2" fill="rgb(190,190,190)" stroke="rgb(190,190,190)" stroke-width="0.5"/>
<polygon points="984.4,629.9 1061.0,633.9 1027.6,584.2" fill="rgb(185,185,185)" stroke="rgb(185,185,185)" stroke-width="0.5"/>
<polygon points="984.4,629.9 1016.2,670.3 1061.0,633.9" fill="rgb(183,183,183)" stroke="rgb(183,183,183)" stroke-width="0.5"/>
<polygon points="912.3,612.3 886.9,549.9 951.0,572.7" fill="rgb(197,197,197)" stroke="rgb(197,197,197)" stroke-width="0.5"/>
<polygon points="912.3,612.3 984.4,629.9 951.0,572.7" fill="rgb(191,191,191)" stroke="rgb(191,191,191)" stroke-width="0.5"/>
<polygon points="912.3,612.3 984.4,629.9 948.4,659.7" fill="rgb(189,189,189)" stroke="rgb(189,189,189)" stroke-width="0.5"/>
<polygon points="912.3,612.3 886.9,549.9 863.1,583.3" fill="rgb(198,198,198)" stroke="rgb(198,198,198)" stroke-width="0.5"/>
<polygon points="1127.8,517.9 1135.7,440.0 1083.8,458.1" fill="rgb(194,194,194)" stroke="rgb(194,194,194)" stroke-width="0.5"/>
<polygon points="1127.8,517.9 1167.3,498.5 1135.7,440.0" fill="rgb(192,192,192)" stroke="rgb(192,192,192)" stroke-width="0.5"/>
<polygon points="1127.8,517.9 1067.1,526.8 1083.8,458.1" fill="rgb(193,193,193)" stroke="rgb(193,193,193)" stroke-width="0.5"/>
<polygon points="1127.8,517.9 1067.1,526.8 1102.3,579.8" fill="rgb(188,188,188)" stroke="rgb(188,188,188)" stroke-width="0.5"/>
<polygon points="1127.8,517.9 1102.3,579.8 1159.4,562.2" fill="rgb(184,184,184)" stroke="rgb(184,184,184)" stroke-width="0.5"/>
<polygon points="1127.8,517.9 1167.3,498.5 1159.4,562.2" fill="rgb(187,187,187)" stroke="rgb(187,187,187)" stroke-width="0.5"/>
<polygon points="905.3,412.4 862.2,458.1 883.3,484.5" fill="url(#g30)" stroke="url(#g30)" stroke-width="0.5"/>
<polygon points="905.3,412.4 937.8,439.6 883.3,484.5" fill="url(#g31)" stroke="url(#g31)" stroke-width="0.5"/>
<polygon points="905.3,412.4 918.0,385.0 867.5,432.6" fill="url(#g32)" stroke="url(#g32)" stroke-width="0.5"/>
<polygon points="905.3,412.4 862.2,458.1 867.5,432.6" fill="url(#g33)" stroke="url(#g33)" stroke-width="0.5"/>
<polygon points="930.8,508.2 1006.4,458.1 995.8,524.4" fill="url(#g34)" stroke="url(#g34)" stroke-width="0.5"/>
<polygon points="930.8,508.2 937.8,439.6 1006.4,458.1" fill="url(#g35)" stroke="url(#g35)" stroke-width="0.5"/>
<polygon points="930.8,508.2 995.8,524.4 951.0,572.7" fill="url(#g36)" stroke="url(#g36)" stroke-width="0.5"/>
<polygon points="930.8,508.2 937.8,439.6 883.3,484.5" fill="url(#g37)" stroke="url(#g37)" stroke-width="0.5"/>
<polygon points="930.8,508.2 886.9,549.9 951.0,572.7" fill="url(#g38)" stroke="url(#g38)" stroke-width="0.5"/>
<polygon points="930.8,508.2 886.9,549.9 883.3,484.5" fill="url(#g39)" stroke="url(#g39)" stroke-width="0.5"/>
<polygon points="893.9,639.5 863.1,583.3 860.5,607.9" fill="rgb(197,197,197)" stroke="rgb(197,197,197)" stroke-width="0.5"/>
<polygon points="893.9,639.5 912.3,612.3 863.1,583.3" fill="rgb(196,196,196)" stroke="rgb(196,196,196)" stroke-width="0.5"/>
<polygon points="893.9,639.5 921.1,669.4 860.5,607.9" fill="rgb(193,193,193)" stroke="rgb(193,193,193)" stroke-width="0.5"/>
<polygon points="893.9,639.5 912.3,612.3 948.4,659.7" fill="rgb(191,191,191)" stroke="rgb(191,191,191)" stroke-width="0.5"/>
<polygon points="893.9,639.5 921.1,669.4 948.4,659.7" fill="rgb(188,188,188)" stroke="rgb(188,188,188)" stroke-width="0.5"/>
<polygon points="984.4,689.6 1016.2,670.3 1054.8,690.5" fill="rgb(179,179,179)" stroke="rgb(179,179,179)" stroke-width="0.5"/>
<polygon points="984.4,689.6 948.4,659.7 1016.2,670.3" fill="rgb(183,183,183)" stroke="rgb(183,183,183)" stroke-width="0.5"/>
<polygon points="984.4,689.6 921.1,669.4 948.4,659.7" fill="rgb(186,186,186)" stroke="rgb(186,186,186)" stroke-width="0.5"/>
<polygon points="963.3,381.6 918.0,385.0 995.8,359.7" fill="url(#g40)" stroke="url(#g40)" stroke-width="0.5"/>
<polygon points="963.3,381.6 905.3,412.4 918.0,385.0" fill="url(#g41)" stroke="url(#g41)" stroke-width="0.5"/>
<polygon points="963.3,381.6 1027.6,370.7 995.8,359.7" fill="url(#g42)" stroke="url(#g42)" stroke-width="0.5"/>
<polygon points="963.3,381.6 1027.6,370.7 1017.9,405.4" fill="url(#g43)" stroke="url(#g43)" stroke-width="0.5"/>
<polygon points="963.3,381.6 937.8,439.6 1017.9,405.4" fill="url(#g44)" stroke="url(#g44)" stroke-width="0.5"/>
<polygon points="963.3,381.6 905.3,412.4 937.8,439.6" fill="url(#g45)" stroke="url(#g45)" stroke-width="0.5"/>
<path d="M995.8 359.7L963.3 381.6M995.8 359.7L1027.6 370.7M1069.8 366.7L1027.6 370.7M1069.8 366.7L1085.6 394.8M918.0 385.0L963.3 381.6M918.0 385.0L905.3 412.4M867.5 432.6L905.3 412.4M867.5 432.6L862.2 458.1M842.9 488.9L862.2 458.1M842.9 488.9L851.0 520.0M1140.1 410.6L1085.6 394.8M1140.1 410.6L1135.7 440.0M1177.9 470.4L1135.7 440.0M1177.9 470.4L1167.3 498.5M1185.8 535.0L1167.3 498.5M1185.8 535.0L1159.4 562.2M1169.1 595.6L1159.4 562.2M1169.1 595.6L1127.8 622.0M1130.4 649.2L1127.8 622.0M1130.4 649.2L1081.2 667.7M1054.8 690.5L1016.2 670.3M1054.8 690.5L1081.2 667.7M984.4 689.6L948.4 659.7M984.4 689.6L1016.2 670.3M921.1 669.4L893.9 639.5M921.1 669.4L948.4 659.7M893.9 639.5L860.5 607.9M893.9 639.5L863.1 583.3M893.9 639.5L912.3 612.3M893.9 639.5L948.4 659.7M860.5 607.9L863.1 583.3M842.0 550.8L851.0 520.0M842.0 550.8L863.1 583.3M963.3 381.6L1027.6 370.7M963.3 381.6L905.3 412.4M963.3 381.6L937.8 439.6M963.3 381.6L1017.9 405.4M1027.6 370.7L1017.9 405.4M1027.6 370.7L1085.6 394.8M905.3 412.4L937.8 439.6M905.3 412.4L862.2 458.1M905.3 412.4L883.3 484.5M937.8 439.6L1017.9 405.4M937.8 439.6L1006.4 458.1M937.8 439.6L883.3 484.5M937.8 439.6L930.8 508.2M1017.9 405.4L1085.6 394.8M1017.9 405.4L1006.4 458.1M1017.9 405.4L1083.8 458.1M1085.6 394.8L1083.8 458.1M1085.6 394.8L1135.7 440.0M862.2 458.1L883.3 484.5M862.2 458.1L851.0 520.0M1006.4 458.1L1083.8 458.1M1006.4 458.1L930.8 508.2M1006.4 458.1L995.8 524.4M1006.4 458.1L1067.1 526.8M1083.8 458.1L1135.7 440.0M1083.8 458.1L1067.1 526.8M1083.8 458.1L1127.8 517.9M1135.7 440.0L1127.8 517.9M1135.7 440.0L1167.3 498.5M883.3 484.5L930.8 508.2M883.3 484.5L851.0 520.0M883.3 484.5L886.9 549.9M930.8 508.2L995.8 524.4M930.8 508.2L886.9 549.9M930.8 508.2L951.0 572.7M851.0 520.0L886.9 549.9M851.0 520.0L863.1 583.3M995.8 524.4L1067.1 526.8M995.8 524.4L951.0 572.7M995.8 524.4L1027.6 584.2M1067.1 526.8L1127.8 517.9M1067.1 526.8L1027.6 584.2M1067.1 526.8L1102.3 579.8M1127.8 517.9L1167.3 498.5M1127.8 517.9L1102.3 579.8M1127.8 517.9L1159.4 562.2M1167.3 498.5L1159.4 562.2M886.9 549.9L951.0 572.7M886.9 549.9L863.1 583.3M886.9 549.9L912.3 612.3M951.0 572.7L1027.6 584.2M951.0 572.7L912.3 612.3M951.0 572.7L984.4 629.9M1027.6 584.2L1102.3 579.8M1027.6 584.2L984.4 629.9M1027.6 584.2L1061.0 633.9M1102.3 579.8L1159.4 562.2M1102.3 579.8L1061.0 633.9M1102.3 579.8L1127.8 622.0M1159.4 562.2L1127.8 622.0M863.1 583.3L912.3 612.3M912.3 612.3L984.4 629.9M912.3 612.3L948.4 659.7M984.4 629.9L1061.0 633.9M984.4 629.9L948.4 659.7M984.4 629.9L1016.2 670.3M1061.0 633.9L1127.8 622.0M1061.0 633.9L1016.2 670.3M1061.0 633.9L1081.2 667.7M1127.8 622.0L1081.2 667.7M948.4 659.7L1016.2 670.3M1016.2 670.3L1081.2 667.7" stroke="#111" stroke-width="0.9" fill="none"/>
<polygon points="1130.8,649.6 1055.0,691.1 984.3,690.2 920.8,669.9 860.0,608.2 841.4,550.9 842.3,488.8 867.0,432.3 917.7,384.5 995.7,359.1 1070.0,366.1 1140.5,410.2 1178.5,470.2 1186.4,535.0 1169.7,595.8" fill="none" stroke="#99c1e9" stroke-width="3.6" stroke-linejoin="round"/>
<polygon points="251.4,372 106.8,459 180,523.7" fill="#f4f4f4" stroke="#f4f4f4" stroke-width="0.6"/>
<polygon points="251.4,372 180,523.7 374.5,498" fill="#cdcdcd" stroke="#cdcdcd" stroke-width="0.6"/>
<polygon points="251.4,372 374.5,498 397.5,422.5" fill="#c4c4c4" stroke="#c4c4c4" stroke-width="0.6"/>
<polygon points="397.5,422.5 374.5,498 423.8,592.3" fill="#acacac" stroke="#acacac" stroke-width="0.6"/>
<polygon points="106.8,459 180,523.7 132,638" fill="url(#ig1)" stroke="url(#ig1)" stroke-width="0.6"/>
<polygon points="180,523.7 132,638 297.5,667.8" fill="url(#ig2)" stroke="url(#ig2)" stroke-width="0.6"/>
<polygon points="180,523.7 374.5,498 297.5,667.8" fill="#b0b0b0" stroke="#b0b0b0" stroke-width="0.6"/>
<polygon points="374.5,498 297.5,667.8 423.8,592.3" fill="#aaaaaa" stroke="#aaaaaa" stroke-width="0.6"/>
<polygon points="132,638 284,672.5 297.5,667.8" fill="#c4c4c4" stroke="#c4c4c4" stroke-width="0.6"/>
<path d="M251.4 372L180 523.7M106.8 459L180 523.7M180 523.7L374.5 498M251.4 372L374.5 498M397.5 422.5L374.5 498M374.5 498L423.8 592.3M374.5 498L297.5 667.8M180 523.7L297.5 667.8M180 523.7L132 638M132 638L297.5 667.8" stroke="#111" stroke-width="0.9" fill="none"/>
<polygon points="251.4,372 397.5,422.5 423.8,592.3 297.5,667.8 284,672.5 132,638 106.8,459" fill="none" stroke="#99c1e9" stroke-width="3.4" stroke-linejoin="round"/>
<path d="M189.4 528 L195.8 523.4 V526.3 H209.4 V523.4 L216.2 528 L209.4 532.6 V529.7 H195.8 V532.6 Z" fill="#7af53c"/><path d="M648.3 369 L653.2 374.8 H650.3 V387.2 H653.2 L648.3 394.2 L643.4 387.2 H646.3 V374.8 H643.4 Z" fill="#1db8fc"/><path d="M648.7 599 L653.2 602.5 H650.3 V608.7 H653.2 L648.7 612.2 L644.2 608.7 H647.1 V602.5 H644.2 Z" fill="#1db8fc"/></svg>
</body></html>
